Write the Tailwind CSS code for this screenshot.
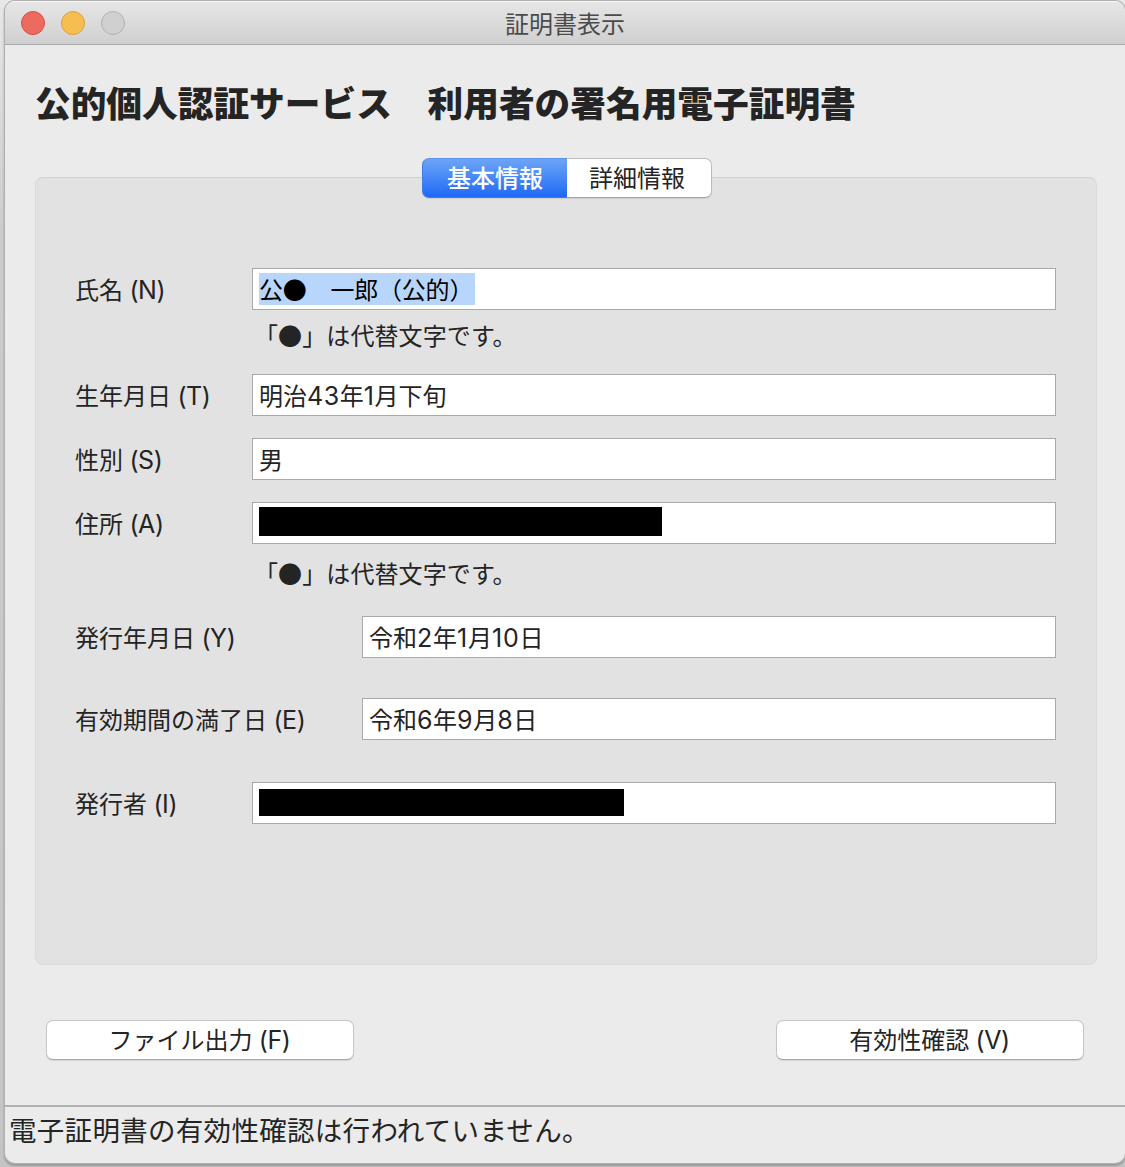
<!DOCTYPE html>
<html lang="ja">
<head>
<meta charset="utf-8">
<title>証明書表示</title>
<script src="https://cdn.jsdelivr.net/npm/@tailwindcss/browser@4"></script>
</head>
<body class="h-[1167px] w-[1125px] overflow-hidden bg-linear-to-b from-[#e8e8e8] via-[#cccccc] via-20% to-[#c4c4c4] pl-[5px] pt-px font-['Noto_Sans_CJK_JP',sans-serif] text-[24px] leading-[40px] text-[#242424]">
<div class="flex h-[1162px] w-[1120px] flex-col overflow-hidden rounded-[10px] bg-[#ebebeb] shadow-[0_0_0_1px_#b0b0b0,0_2px_2px_1px_#999999]">
  <header class="flex h-[44px] shrink-0 items-center border-b border-[#a9a9a9] bg-linear-to-b from-[#e7e7e7] to-[#cfcfcf] pl-4 shadow-[inset_0_1px_0_#f5f5f5]">
    <div class="flex w-[104px] gap-4">
      <span class="size-6 rounded-full border border-[#d35047] bg-[#ed6a5f]"></span>
      <span class="size-6 rounded-full border border-[#d9a13c] bg-[#f6be50]"></span>
      <span class="size-6 rounded-full border border-[#b1b1b1] bg-[#d0d0d0]"></span>
    </div>
    <h1 class="w-[880px] text-center text-[#4b4b4b]">証明書表示</h1>
  </header>

  <main class="flex grow flex-col pl-[30px]">
    <h2 class="mt-[31px] h-[52px] text-[35.7px] leading-[52px] font-black whitespace-nowrap">公的個人認証サービス　利用者の署名用電子証明書</h2>
    <nav class="z-10 mt-[30px] ml-[387px] flex h-[40px] w-[290px] rounded-[7px] text-center leading-[36px] shadow-[0_1px_1px_#00000018]">
      <button class="w-[145px] rounded-l-[7px] border border-r-0 border-[#3f7de8] border-t-[#5f93e8] bg-linear-to-b from-[#6ca4f7] to-[#1d68f5] pb-[3px] font-medium text-white">基本情報</button>
      <button class="w-[145px] rounded-r-[7px] border border-l-0 border-[#bcbcbc] border-b-[#a8a8a8] bg-white pr-1 pb-[3px]">詳細情報</button>
    </nav>
    <section class="-mt-[21px] flex h-[788px] w-[1062px] flex-col rounded-[8px] border border-[#dadada] border-t-[#d0d0d0] bg-[#e2e2e2] pt-[90px] pl-[39px]">
      <div class="flex h-[42px]">
        <label class="w-[177px] leading-[42px]">氏名 <span class="ml-px font-['Inter'] text-[25px] tracking-[-0.4px]">(N)</span></label>
        <div class="flex w-[804px] items-center border border-[#a9a9a9] bg-white pl-[6px]"><span class="h-8 w-[216px] bg-[#b8d6fb] leading-8 tracking-[-0.2px] whitespace-nowrap text-black">公●　一郎（公的）</span></div>
      </div>
      <p class="mt-1 h-[42px] pl-[179px] leading-[42px] tracking-[0.1px]">「●」は代替文字です。</p>
      <div class="mt-[18px] flex h-[42px]">
        <label class="w-[177px] leading-[42px]">生年月日 <span class="ml-px font-['Inter'] text-[25px] tracking-[-0.4px]">(T)</span></label>
        <div class="w-[804px] border border-[#a9a9a9] bg-white pl-[6px]">明治<span class="font-['Inter'] text-[25px] tracking-[0.6px]">43</span>年<span class="font-['Inter'] text-[25px] tracking-[0.6px]">1</span>月下旬</div>
      </div>
      <div class="mt-[22px] flex h-[42px]">
        <label class="w-[177px] leading-[42px]">性別 <span class="ml-px font-['Inter'] text-[25px] tracking-[-0.4px]">(S)</span></label>
        <div class="w-[804px] border border-[#a9a9a9] bg-white pl-[6px]">男</div>
      </div>
      <div class="mt-[22px] flex h-[42px]">
        <label class="w-[177px] leading-[42px]">住所 <span class="ml-px font-['Inter'] text-[25px] tracking-[-0.4px]">(A)</span></label>
        <div class="w-[804px] border border-[#a9a9a9] bg-white pt-1 pl-[6px]"><div class="h-[29px] w-[403px] bg-black"></div></div>
      </div>
      <p class="mt-2 h-[42px] pl-[179px] leading-[42px] tracking-[0.1px]">「●」は代替文字です。</p>
      <div class="mt-[22px] flex h-[42px]">
        <label class="w-[287px] leading-[42px]">発行年月日 <span class="ml-px font-['Inter'] text-[25px] tracking-[-0.4px]">(Y)</span></label>
        <div class="w-[694px] border border-[#a9a9a9] bg-white pl-[6px]">令和<span class="font-['Inter'] text-[25px] tracking-[0.8px]">2</span>年<span class="font-['Inter'] text-[25px] tracking-[0.8px]">1</span>月<span class="font-['Inter'] text-[25px] tracking-[0.8px]">10</span>日</div>
      </div>
      <div class="mt-[40px] flex h-[42px]">
        <label class="w-[287px] leading-[42px]">有効期間の満了日 <span class="ml-px font-['Inter'] text-[25px] tracking-[-0.4px]">(E)</span></label>
        <div class="w-[694px] border border-[#a9a9a9] bg-white pl-[6px]">令和<span class="font-['Inter'] text-[25px] tracking-[0.6px]">6</span>年<span class="font-['Inter'] text-[25px] tracking-[0.6px]">9</span>月<span class="font-['Inter'] text-[25px] tracking-[0.6px]">8</span>日</div>
      </div>
      <div class="mt-[42px] flex h-[42px]">
        <label class="w-[177px] leading-[42px]">発行者 <span class="ml-px font-['Inter'] text-[25px] tracking-[-0.4px]">(I)</span></label>
        <div class="w-[804px] border border-[#a9a9a9] bg-white pt-[6px] pl-[6px]"><div class="h-[27px] w-[365px] bg-black"></div></div>
      </div>
    </section>
    <div class="mt-[55px] ml-[11px] flex w-[1038px] justify-between leading-[36px]">
      <button class="h-[40px] w-[308px] rounded-[7px] border border-[#c6c6c6] border-b-[#a8a8a8] bg-white pr-px pb-[2px] shadow-[0_1px_1px_#00000018]">ファイル出力 <span class="ml-px font-['Inter'] text-[25px] tracking-[-0.4px]">(F)</span></button>
      <button class="h-[40px] w-[308px] rounded-[7px] border border-[#c6c6c6] border-b-[#a8a8a8] bg-white pr-px pb-[2px] shadow-[0_1px_1px_#00000018]">有効性確認 <span class="ml-px font-['Inter'] text-[25px] tracking-[-0.4px]">(V)</span></button>
    </div>
  </main>
  <footer class="h-[58px] shrink-0 border-t-2 border-[#b1b1b1] pl-1 text-[27.5px] leading-[44px] tracking-[0.3px]">電子証明書の有効性確認は行われていません。</footer>
</div>
</body>
</html>
